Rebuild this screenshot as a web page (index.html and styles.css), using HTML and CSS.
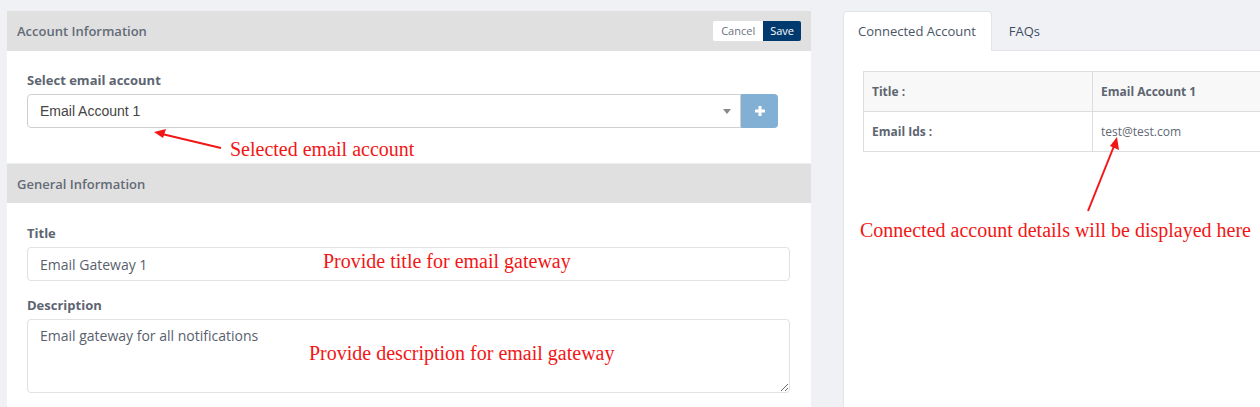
FILE: index.html
```html
<!DOCTYPE html>
<html>
<head>
<meta charset="utf-8">
<link rel="stylesheet" href="styles.css">
</head>
<body>
<div class="page">
  <div class="left">
    <div class="sec-head">
      <span>Account Information</span>
      <div class="actions">
        <button class="btn-cancel">Cancel</button><button class="btn-save">Save</button>
      </div>
    </div>
    <div class="sec-body acc-body">
      <label class="lbl">Select email account</label>
      <div class="select-row">
        <div class="select">
          <span>Email Account 1</span>
          <span class="caret"></span>
        </div>
        <button class="btn-plus">
          <svg width="12" height="12" viewBox="0 0 12 12"><path d="M6 1v10M1 6h10" stroke="#fff" stroke-width="3"/></svg>
        </button>
      </div>
    </div>
    <div class="sec-head sec-head2"><span>General Information</span></div>
    <div class="sec-body gen-body">
      <label class="lbl">Title</label>
      <div class="input">Email Gateway 1</div>
      <label class="lbl lbl2">Description</label>
      <textarea class="textarea">Email gateway for all notifications</textarea>
    </div>
  </div>
  <div class="right">
    <div class="tabs">
      <div class="tab active">Connected Account</div>
      <div class="tab">FAQs</div>
    </div>
    <div class="tab-body">
      <table class="info">
        <tr class="r1"><th>Title :</th><th class="c2">Email Account 1</th></tr>
        <tr><th>Email Ids :</th><td class="c2">test@test.com</td></tr>
      </table>
    </div>
  </div>

  <div class="note n1">Selected email account</div>
  <div class="note n2">Provide title for email gateway</div>
  <div class="note n3">Provide description for email gateway</div>
  <div class="note n4">Connected account details will be displayed here</div>
  <svg class="arrows" width="1260" height="407" viewBox="0 0 1260 407">
    <line x1="221" y1="148" x2="162" y2="134" stroke="#f21616" stroke-width="2"/>
    <path d="M154 132 L166 129 L163 138 Z" fill="#f21616"/>
    <line x1="1088" y1="211" x2="1114" y2="146" stroke="#f21616" stroke-width="2"/>
    <path d="M1117 137 L1119 150 L1110 146 Z" fill="#f21616"/>
  </svg>
</div>
</body>
</html>
```

FILE: styles.css
```css
* { box-sizing: border-box; }
html, body { margin: 0; padding: 0; }
body {
  background: #eff1f5;
  font-family: "Open Sans", "Liberation Sans", sans-serif;
  color: #5a6270;
  overflow: hidden;
  width: 1260px;
  height: 407px;
}
.page {
  position: relative;
  display: flex;
  gap: 32px;
  padding: 11px 0 0 7px;
  height: 407px;
  overflow: hidden;
}
.left {
  width: 804px;
  flex: none;
  background: #fff;
  height: 396px;
}
.sec-head {
  height: 40px;
  background: #e0e0e0;
  display: flex;
  align-items: center;
  justify-content: space-between;
  padding: 0 10px;
  font-size: 13px;
  font-weight: 600;
  color: #636b77;
}
.sec-head2 { border-top: 1px solid #eceef2; height: 40px; }
.actions { display: flex; margin-right: 0; }
.actions button {
  font-family: "Open Sans", "Liberation Sans", sans-serif;
  font-size: 11px;
  height: 20px;
  border: none;
  padding: 0 7px;
  line-height: 20px;
}
.btn-cancel { background: #fff; color: #6a7380; border-radius: 2px 0 0 2px; padding: 0 8px 0 8px !important; }
.btn-save { background: #003a6e; color: #fff; border-radius: 0 2px 2px 0; }
.sec-body { padding: 20px 21px 0 20px; }
.gen-body { padding-top: 21px; }
.acc-body { height: 112px; }
.lbl {
  display: block;
  font-size: 13px;
  font-weight: 700;
  color: #5d6571;
  line-height: 18px;
  margin-bottom: 5px;
}
.lbl2 { margin-top: 15px; }
.select-row { display: flex; }
.select {
  width: 714px;
  height: 34px;
  border: 1px solid #cfcfcf;
  border-radius: 4px 0 0 4px;
  display: flex;
  align-items: center;
  justify-content: space-between;
  padding: 0 9px 1px 12px;
  font-family: "Liberation Sans", Arial, sans-serif;
  font-size: 14px;
  color: #444;
}
.caret {
  width: 0; height: 0;
  border-left: 4px solid transparent;
  border-right: 4px solid transparent;
  border-top: 5px solid #888;
  margin-top: 1px;
}
.btn-plus {
  width: 37px;
  height: 34px;
  border: none;
  background: #82afd4;
  border-radius: 0 4px 4px 0;
  display: flex;
  align-items: center;
  justify-content: center;
  padding: 0;
}
.input {
  height: 34px;
  border: 1px solid #e2e2e2;
  border-radius: 4px;
  padding: 0 12px;
  display: flex;
  align-items: center;
  font-size: 14px;
  color: #59616d;
  width: 763px;
}
.textarea {
  display: block;
  width: 763px;
  height: 74px;
  border: 1px solid #e2e2e2;
  border-radius: 4px;
  padding: 6px 12px;
  font-family: "Open Sans", "Liberation Sans", sans-serif;
  font-size: 14px;
  color: #59616d;
  resize: vertical;
  line-height: 20px;
}
.right {
  flex: none;
  width: 417px;
  overflow: hidden;
}
.tabs {
  display: flex;
  height: 40px;
  border-bottom: 1px solid #e2e4e8;
}
.tab {
  padding: 0 15px;
  line-height: 40px;
  font-size: 13px;
  color: #3f4d63;
}
.tab.active {
  background: #fff;
  border: 1px solid #e2e4e8;
  border-bottom: none;
  border-radius: 4px 4px 0 0;
  height: 40px;
  line-height: 39px;
  padding: 0 15px 0 14px;
  color: #4b5566;
}
.tab:not(.active) { padding-left: 17px; }
.tab-body {
  background: #fff;
  border-left: 1px solid #e2e4e8;
  height: 356px;
  padding: 20px 0 0 19px;
  overflow: hidden;
}
.info {
  border-collapse: collapse;
  width: 460px;
  font-size: 12px;
}
.info th, .info td {
  border: 1px solid #dddddd;
  height: 40px;
  text-align: left;
  padding: 0 8px;
  color: #5d6571;
}
.info th { font-weight: 700; }
.info td { font-weight: 400; color: #606875; }
.info th:first-child { width: 229px; }
.info .r1 { background: #f8f8f8; }
.note {
  position: absolute;
  font-family: "Liberation Serif", "Times New Roman", serif;
  font-size: 20px;
  color: #f21616;
  white-space: nowrap;
  line-height: 22px;
}
.n1 { left: 230px; top: 138px; }
.n2 { left: 323px; top: 250px; }
.n3 { left: 309px; top: 342px; }
.n4 { left: 860px; top: 219px; }
.arrows { position: absolute; left: 0; top: 0; pointer-events: none; }
```
